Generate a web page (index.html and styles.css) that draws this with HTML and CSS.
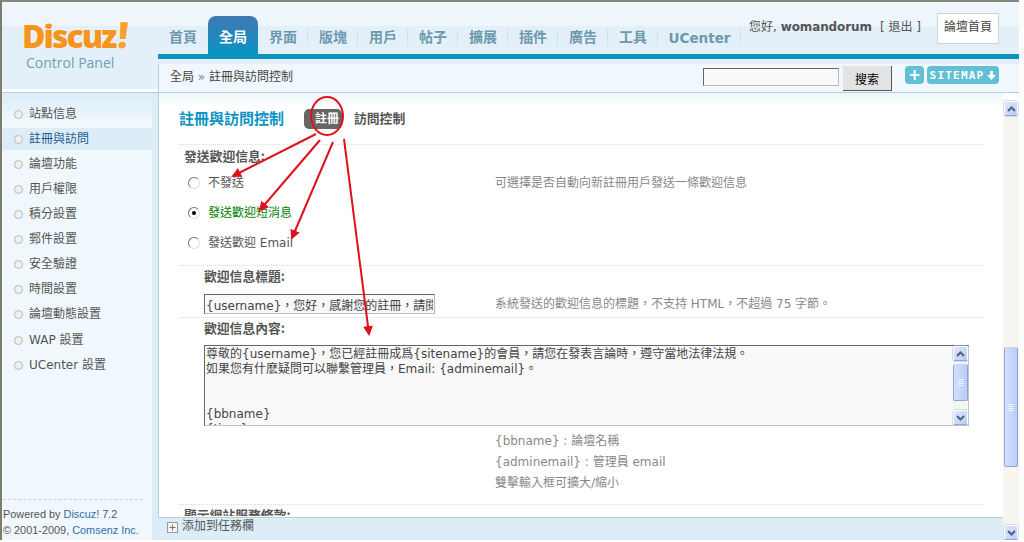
FILE: index.html
```html
<!DOCTYPE html>
<html lang="zh-Hant">
<head>
<meta charset="utf-8">
<title>Discuz! Control Panel</title>
<link rel="stylesheet" href="styles.css">
</head>
<body>
<div class="frame">
  <header class="header">
    <div class="logo">
      <div class="logo-mark">Discuz<span class="logo-bang">!</span></div>
      <div class="logo-sub">Control Panel</div>
    </div>
    <div class="head-main">
      <div class="head-top">
        <nav class="tabs">
          <a class="tab">首頁</a><a class="tab active">全局</a><a class="tab">界面</a><a class="tab">版塊</a><a class="tab">用戶</a><a class="tab">帖子</a><a class="tab">擴展</a><a class="tab">插件</a><a class="tab">廣告</a><a class="tab">工具</a><a class="tab wide">UCenter</a>
        </nav>
        <div class="user">您好, <b>womandorum</b><span class="logout">[ 退出 ]</span></div>
        <a class="home-link">論壇首頁</a>
      </div>
      <div class="stripe"></div>
      <div class="crumbbar">
        <div class="crumb">全局 <span class="crumb-sep">»</span> 註冊與訪問控制</div>
        <input class="search-input" type="text">
        <button class="search-btn">搜索</button>
        <a class="pill-btn plus">+</a>
        <a class="pill-btn sitemap">SITEMAP
          <svg class="sitemap-arrow" viewBox="0 0 9 9" width="9" height="9"><path d="M3 0h3v4h3L4.500 9 0 4h3z" fill="#fff"/></svg>
        </a>
      </div>
    </div>
  </header>
  <div class="body-row">
    <aside class="side">
      <ul class="menu">
        <li class="item">站點信息</li>
        <li class="item current">註冊與訪問</li>
        <li class="item">論壇功能</li>
        <li class="item">用戶權限</li>
        <li class="item">積分設置</li>
        <li class="item">郵件設置</li>
        <li class="item">安全驗證</li>
        <li class="item">時間設置</li>
        <li class="item">論壇動態設置</li>
        <li class="item latin">WAP 設置</li>
        <li class="item latin">UCenter 設置</li>
      </ul>
      <div class="powered">
        <p>Powered by <a>Discuz!</a> 7.2</p>
        <p>© 2001-2009, <a>Comsenz Inc.</a></p>
      </div>
    </aside>
    <main class="main">
      <div class="main-col">
        <div class="content">
          <div class="title-row">
            <h1 class="title">註冊與訪問控制</h1>
            <span class="sub-tab on">註冊</span>
            <span class="sub-tab">訪問控制</span>
          </div>
          <section class="row row-radio">
            <div class="radio-col">
              <h2 class="label">發送歡迎信息:</h2>
              <label class="radio"><input type="radio" name="w">不發送</label>
              <label class="radio green"><input type="radio" name="w" checked>發送歡迎短消息</label>
              <label class="radio"><input type="radio" name="w">發送歡迎 Email</label>
            </div>
            <p class="tip tip-a">可選擇是否自動向新註冊用戶發送一條歡迎信息</p>
          </section>
          <section class="row row-title">
            <div class="field-col">
              <h2 class="label">歡迎信息標題:</h2>
              <input class="text-input" type="text" value="{username}，您好，感謝您的註冊，請閱讀以下內容。">
            </div>
            <p class="tip tip-b">系統發送的歡迎信息的標題，不支持 HTML，不超過 75 字節。</p>
          </section>
          <section class="row row-body">
            <h2 class="label">歡迎信息內容:</h2>
            <div class="area">
              <textarea class="area-text" readonly>尊敬的{username}，您已經註冊成爲{sitename}的會員，請您在發表言論時，遵守當地法律法規。
如果您有什麽疑問可以聯繫管理員，Email: {adminemail}。


{bbname}
{time}</textarea>
              <div class="sb sb-inner">
                <span class="sb-btn"><svg viewBox="0 0 9 6" width="9" height="6"><path d="M1 5l3.500-3.500L8 5" fill="none" stroke="#4d6185" stroke-width="2"/></svg></span>
                <span class="sb-gap inner-top"></span>
                <span class="sb-thumb inner-thumb"><i></i><i></i><i></i><i></i></span>
                <span class="sb-gap flex"></span>
                <span class="sb-btn"><svg viewBox="0 0 9 6" width="9" height="6"><path d="M1 1l3.500 3.500L8 1" fill="none" stroke="#4d6185" stroke-width="2"/></svg></span>
              </div>
            </div>
            <div class="var-tips">
              <p>{bbname} : 論壇名稱</p>
              <p>{adminemail} : 管理員 email</p>
              <p>雙擊輸入框可擴大/縮小</p>
            </div>
          </section>
          <section class="row row-next">
            <h2 class="label">顯示網站服務條款:</h2>
          </section>
        </div>
        <div class="taskbar">
          <svg class="task-icon" viewBox="0 0 11 11" width="11" height="11"><rect x=".5" y=".5" width="10" height="10" fill="#f4f4f4" stroke="#999"/><path d="M5.500 2.500v6M2.500 5.500h6" stroke="#777"/></svg>
          添加到任務欄
        </div>
      </div>
      <div class="sb sb-page">
        <span class="sb-btn"><svg viewBox="0 0 9 6" width="9" height="6"><path d="M1 5l3.500-3.500L8 5" fill="none" stroke="#4d6185" stroke-width="2"/></svg></span>
        <span class="sb-gap page-top"></span>
        <span class="sb-thumb page-thumb"><i></i><i></i><i></i><i></i></span>
        <span class="sb-gap flex"></span>
        <span class="sb-btn"><svg viewBox="0 0 9 6" width="9" height="6"><path d="M1 1l3.500 3.500L8 1" fill="none" stroke="#4d6185" stroke-width="2"/></svg></span>
      </div>
    </main>
  </div>
  <svg class="marks" viewBox="0 0 1024 542" width="1024" height="542">
    <defs><marker id="head" markerWidth="5" markerHeight="5" refX="4" refY="2.500" orient="auto"><path d="M0 0L5 2.500 0 5z" fill="#e0101c"/></marker></defs>
    <ellipse cx="327" cy="116" rx="16" ry="19" fill="none" stroke="#e0101c" stroke-width="2"/>
    <g stroke="#e0101c" stroke-width="2" fill="none">
      <path d="M316 134L233 176" marker-end="url(#head)"/>
      <path d="M320 140L260 210" marker-end="url(#head)"/>
      <path d="M333 142L292 238" marker-end="url(#head)"/>
      <path d="M344 139L369 334" marker-end="url(#head)"/>
    </g>
  </svg>
</div>
</body>
</html>
```
FILE: styles.css
```css
* { box-sizing: border-box; }
html, body { margin: 0; height: 100%; background: #fcfcfb; overflow: hidden; }
body { font: 12px/15px "DejaVu Sans", "Noto Sans CJK TC", sans-serif; color: #555; }
h1, h2, p, ul { margin: 0; padding: 0; font-size: inherit; }
ul { list-style: none; }
.frame { position: relative; width: 1019px; height: 540px; border-top: 2px solid #8a857a; border-left: 2px solid #7f7b70; display: flex; flex-direction: column; background: #dcedf8; overflow: hidden; }

/* header */
.header { display: flex; height: 90px; flex: none; background: linear-gradient(#eef5fb 0, #eef5fb 24px, #e3f0f9 24px, #e3f0f9 100%); }
.logo { width: 156px; flex: none; padding: 19px 0 0 20px; border-bottom: 3px solid #fff; }
.logo-mark { font: 800 32px/30px "Open Sans", sans-serif; letter-spacing: -2px; color: #f7941d; white-space: nowrap; text-shadow: 0 0 2px #fff; }
.logo-bang { display: inline-block; font-size: 36px; line-height: 26px; color: #f9a12e; margin-left: 3px; transform: skewX(-5deg); }
.logo-sub { font: 14px/16px "Open Sans", sans-serif; color: #739db1; margin: 4px 0 0 4px; }
.head-main { flex: 1; display: flex; flex-direction: column; }
.head-top { height: 52px; display: flex; align-items: flex-start; flex: none; }
.tabs { display: flex; margin-top: 14px; height: 38px; }
.tab { width: 50px; height: 38px; display: block; text-align: center; font: bold 14px/40px "Noto Sans CJK TC", sans-serif; color: #6c99ad; position: relative; }
.tab::after { content: ""; position: absolute; right: 0; top: 13px; height: 17px; width: 1px; background: #d2e2ec; }
.tab:first-child::after, .tab.active::after { display: none; }
.tab.active { color: #fff; background: linear-gradient(#3f79b1, #0a94c4); border-radius: 8px 8px 0 0; line-height: 40px; }
.tab.wide { width: 83px; font-family: "DejaVu Sans", sans-serif; font-size: 13.500px; line-height: 44px; }
.user { margin: 17px 0 0 8px; width: 188px; white-space: nowrap; line-height: 16px; }
.user b { color: #555; letter-spacing: -.1px; }
.logout { margin-left: 8px; }
.home-link { margin-top: 11px; width: 62px; height: 31px; background: #fff; border: 1px solid #c5d5dd; text-align: center; line-height: 27px; color: #444; }
.stripe { height: 5px; background: #0a92c1; flex: none; }
.crumbbar { margin-top: 5px; flex: 1; background: #f1f8fd; border-left: 1px solid #b9ced6; display: flex; align-items: flex-start; padding-left: 11px; }
.crumb { width: 533px; margin-top: 5px; line-height: 16px; color: #444; }
.crumb-sep { color: #888; }
.search-input { width: 136px; height: 18px; margin-top: 4px; border: 1px solid; border-color: #666 #bbb #bbb #666; background: #f9f9f9; padding: 0; }
.search-btn { width: 49px; height: 25px; margin: 2px 0 0 4px; padding: 0; background: #e3e3e3; border: 0; border-right: 1px solid #555; border-bottom: 1px solid #555; font: 12px "Noto Sans CJK TC", sans-serif; color: #000; }
.pill-btn { height: 18px; margin-top: 2px; background: #62bfd6; border-radius: 4px; color: #fff; font-weight: bold; display: flex; align-items: center; justify-content: center; }
.plus { width: 19px; margin-left: 13px; font-size: 15px; }
.sitemap { width: 72px; margin-left: 3px; font: bold 11px "DejaVu Sans Mono", monospace; gap: 3px; letter-spacing: 1.200px; white-space: nowrap; }

/* body */
.body-row { flex: 1; display: flex; min-height: 0; border-top: 1px solid #b9ced6; }
.side { width: 150px; flex: none; background: linear-gradient(#dcedf8, #f0f8fd 30px); display: flex; flex-direction: column; padding: 9px 0 2px; }
.menu { flex: 1; }
.item { height: 25px; line-height: 25px; padding-left: 27px; position: relative; color: #555; }
.item::before { content: ""; position: absolute; left: 12px; top: 8px; width: 7px; height: 7px; border-radius: 50%; border: 1px solid #b4b8ba; background: #eef1f2; }
.item.current { background: linear-gradient(#dcedf8, #dcedf8) 0 1px / 100% 22px no-repeat; color: #1d5c8f; }
.item.latin { top: 1px; }
.powered { margin: 0 9px 0 1px; border-top: 1px dashed #c8d4da; padding-top: 6px; white-space: nowrap; font: 10.900px/16px "Liberation Sans", sans-serif; }
.powered a { color: #2f6ea5; }
.main { flex: 1; margin-left: 6px; display: flex; min-width: 0; background: #fff; }
.main-col { flex: 1; display: flex; flex-direction: column; min-width: 0; background: #dcedf8; }
.content { height: 425px; flex: none; overflow: hidden; background: linear-gradient(#eef6fb, #fff 14px); border-left: 1px solid #b9ced6; border-bottom: 1px solid #b9ced6; padding: 0 19px 0 20px; }
.title-row { height: 51px; display: flex; align-items: flex-start; padding-top: 16px; }
.title { font: bold 15px/17px "Noto Sans CJK TC", sans-serif; color: #0a93c3; width: 125px; flex: none; white-space: nowrap; }
.sub-tab { font: bold 12.800px/18px "Noto Sans CJK TC", sans-serif; color: #555; height: 20px; }
.sub-tab.on { width: 38px; background: #666; color: #fff; border-radius: 5px; text-align: center; font-size: 12px; margin-right: 12px; padding-left: 8px; white-space: nowrap; }
.row { border-top: 1px dotted #d8dde0; }
.label { font: bold 12.800px/18px "Noto Sans CJK TC", sans-serif; color: #555; }
.row-radio { height: 121px; display: flex; padding: 2px 0 0 5px; }
.radio-col { width: 311px; flex: none; }
.radio { display: flex; align-items: center; height: 30px; padding-left: 4px; }
.radio:first-of-type { margin-top: 3px; }
.radio input { appearance: none; width: 12px; height: 12px; margin: 0 8px 0 0; border-radius: 50%; border: 1px solid; border-color: #777 #ddd #ddd #777; background: #fff; position: relative; }
.radio input:checked::after { content: ""; position: absolute; left: 3px; top: 3px; width: 4px; height: 4px; border-radius: 50%; background: #000; }
.green { color: #008000; }
.tip { color: #888; white-space: nowrap; }
.tip-a { margin-top: 29px; }
.row-title { height: 52px; display: flex; padding: 1px 0 0 25px; }
.field-col { width: 291px; flex: none; }
.text-input { display: block; width: 231px; height: 20px; margin-top: 9px; padding: 0 1px; border: 1px solid; border-color: #666 #bbb #bbb #666; background: #f9f9f9; font: inherit; color: #444; }
.tip-b { margin-top: 30px; }
.row-body { height: 187px; padding: 1px 0 0 25px; }
.area { display: flex; width: 765px; height: 81px; margin-top: 8px; border: 1px solid; border-color: #666 #c4c4c4 #c4c4c4 #666; background: #f9f9f9; }
.area-text { flex: 1; height: 100%; border: 0; outline: 0; resize: none; overflow: hidden; background: transparent; font: inherit; color: #444; padding: 1px 1px 0; white-space: pre; }
.sb { display: flex; flex-direction: column; flex: none; background: #f6f5ef; }
.sb-inner { width: 15px; }
.sb-page { width: 16px; margin-top: 8px; padding: 0 1px; }
.sb-btn { height: 15px; flex: none; display: flex; align-items: center; justify-content: center; background: linear-gradient(135deg, #dfe9fb, #b8cbf6); border: 1px solid #fff; border-bottom-color: #8ea6d8; border-radius: 2px; box-shadow: 0 0 0 .5px #b0c2e4; }
.sb-gap { flex: none; }
.flex { flex: 1; }
.inner-top { height: 3px; }
.inner-thumb { height: 37px; }
.page-top { height: 231px; }
.page-thumb { height: 120px; }
.sb-thumb { flex: none; display: flex; flex-direction: column; align-items: center; justify-content: center; gap: 1px; background: linear-gradient(90deg, #d3dffb, #b9cdf8); border: 1px solid #8ea6d8; border-top-color: #c9d7f4; border-radius: 2px; }
.sb-thumb i { display: block; width: 6px; height: 1px; background: #eef3fe; }
.var-tips { margin: 5px 0 0 291px; color: #888; line-height: 21px; }
.row-next { height: 12px; overflow: hidden; padding: 1px 0 0 5px; }
.taskbar { flex: 1; display: flex; align-items: flex-start; gap: 4px; padding: 0 0 0 9px; font: 12px/14px "Noto Sans CJK TC", sans-serif; color: #555; }
.task-icon { margin-top: 4px; }
.marks { position: absolute; left: -2px; top: -2px; pointer-events: none; }
```
